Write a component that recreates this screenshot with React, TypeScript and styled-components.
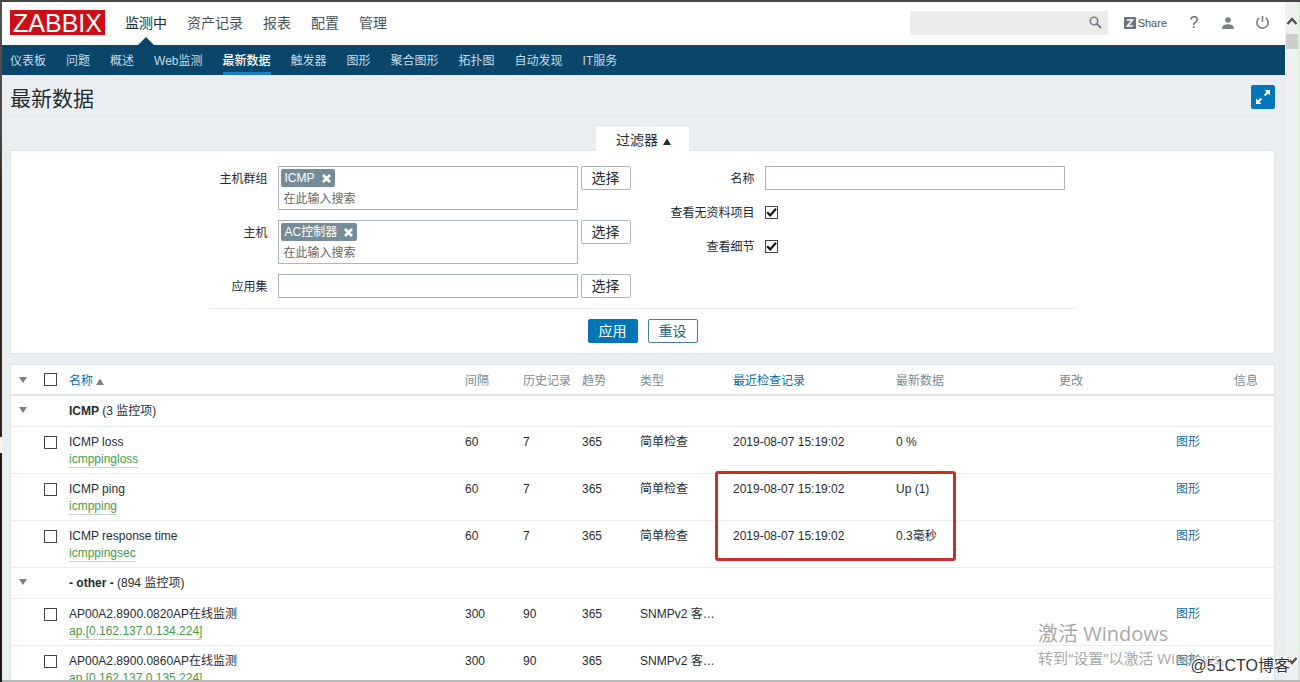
import React from 'react';
import styled, { createGlobalStyle } from 'styled-components';

const Global = createGlobalStyle`
  * { box-sizing: border-box; }
  body {
    margin: 0;
    background: #ebeef0;
    color: #1f2c33;
    font: 12px/16px "Liberation Sans", "Noto Sans CJK SC", sans-serif;
  }
  a { text-decoration: none; color: inherit; }
  button, input { font: inherit; color: inherit; }
`;

const Window = styled.div`
  position: relative;
  display: grid;
  grid-template-columns: 2px 1fr 13px 2px;
  height: 100vh;
  overflow: hidden;
  border-top: 2px solid #454545;
`;

const LeftEdge = styled.div`
  background: linear-gradient(#55504e 0, #4a4a48 130px, #2a2620 200px, #2a2620 435px, #f4f4f4 435px, #f4f4f4 451px, #1e1b12 451px);
`;

const RightEdge = styled.div`
  background: linear-gradient(#d6f5d2 94%, #dfe3e3 94%);
`;

const Page = styled.div`
  min-width: 0;
`;

const ScrollBar = styled.div`
  display: flex;
  flex-direction: column;
  justify-content: space-between;
  align-items: center;
  height: calc(100vh - 2px);
  padding: 14px 0 16px 1px;
  background: #f0f0f0;
`;

const ScrollTop = styled.div`
  display: flex;
  flex-direction: column;
  align-items: center;
  gap: 8px;
  width: 100%;
`;

const Thumb = styled.div`
  width: 100%;
  height: 15px;
  background: #cdcdcd;
`;

const Header = styled.header`
  display: flex;
  align-items: center;
  height: 43px;
  padding: 0 16px 2px 8px;
  background: #fff;
`;

const Logo = styled.a`
  width: 95px;
  height: 25px;
  margin-right: 20px;
  background: #cf0d15;
  color: #fff;
  font-size: 25px;
  line-height: 26px;
  text-align: center;
`;

const MainMenu = styled.nav`
  display: flex;
  flex: 1;
  gap: 20px;
  align-self: stretch;
`;

const MainItem = styled.a<{ $active?: boolean }>`
  position: relative;
  color: ${(p) => (p.$active ? '#1f2c33' : '#4a5359')};
  font-size: 14px;
  line-height: 42px;
  &::after {
    content: '';
    display: ${(p) => (p.$active ? 'block' : 'none')};
    position: absolute;
    left: 50%;
    bottom: -2px;
    margin-left: -8px;
    border: 8px solid transparent;
    border-top-width: 0;
    border-bottom-color: #0a466a;
  }
`;

const SearchBox = styled.form`
  display: flex;
  align-items: center;
  width: 198px;
  height: 24px;
  margin-right: 16px;
  padding-right: 6px;
  background: #ebebeb;
`;

const SearchInput = styled.input`
  flex: 1;
  min-width: 0;
  border: 0;
  background: transparent;
`;

const IconButton = styled.button`
  display: flex;
  padding: 0;
  border: 0;
  background: transparent;
  color: #768088;
`;

const ShareLink = styled.a`
  display: flex;
  align-items: center;
  gap: 2px;
  color: #4a5359;
  font-size: 11px;
`;

const UserTools = styled.div`
  display: flex;
  align-items: center;
  gap: 22px;
  margin-left: 21px;
`;

const HelpLink = styled.a`
  width: 12px;
  color: #5a666e;
  font-size: 16px;
  text-align: center;
`;

const SubNav = styled.nav`
  display: flex;
  gap: 20px;
  height: 30px;
  padding-left: 8px;
  background: #0a466a;
`;

const SubItem = styled.a<{ $active?: boolean }>`
  height: 30px;
  border-bottom: 3px solid ${(p) => (p.$active ? '#1f7fc4' : 'transparent')};
  color: ${(p) => (p.$active ? '#fff' : '#c6dbe6')};
  font-weight: ${(p) => (p.$active ? 500 : 400)};
  line-height: 32px;
`;

const Content = styled.main`
  padding: 0 10px 0 8px;
`;

const TitleBar = styled.div`
  display: flex;
  justify-content: space-between;
  align-items: center;
  height: 41px;
  padding-top: 4px;
  border-bottom: 1px solid #dfe4e7;
`;

const Title = styled.h1`
  margin: 0;
  padding-top: 4px;
  font-size: 21px;
  font-weight: 400;
  line-height: 30px;
`;

const FullscreenButton = styled.button`
  display: grid;
  place-items: center;
  width: 24px;
  height: 24px;
  padding: 0;
  border: 0;
  border-radius: 2px;
  background: #0275b8;
`;

const FilterSection = styled.section`
  display: flex;
  flex-direction: column;
  align-items: center;
  padding-top: 11px;
`;

const FilterTab = styled.button`
  display: flex;
  align-items: baseline;
  gap: 5px;
  height: 24px;
  margin-bottom: -1px;
  padding: 0 18px 0 20px;
  border: 0;
  background: #fff;
  font-size: 14px;
  line-height: 26px;
  z-index: 1;
`;

const FilterPanel = styled.form`
  display: flex;
  flex-direction: column;
  align-items: center;
  width: 100%;
  padding: 15px 0 10px;
  border: 1px solid #dfe4e7;
  background: #fff;
`;

const FilterColumns = styled.div`
  display: flex;
  gap: 40px;
  padding: 0 12px 10px 0;
  border-bottom: 1px solid #ebeef0;
`;

const FieldColumn = styled.div`
  display: flex;
  flex-direction: column;
  gap: 10px;
`;

const Field = styled.div<{ $label: number }>`
  display: grid;
  grid-template-columns: ${(p) => p.$label}px auto auto;
  justify-content: start;
  align-items: start;
`;

const Label = styled.label`
  height: 24px;
  padding-right: 10px;
  line-height: 26px;
  text-align: right;
  white-space: nowrap;
`;

const TextInput = styled.input`
  width: 300px;
  height: 24px;
  padding: 0 5px;
  border: 1px solid #acb6bb;
  background: #fff;
`;

const MultiSelect = styled.div`
  width: 300px;
  height: 44px;
  padding: 2px;
  border: 1px solid #acb6bb;
  background: #fff;
`;

const Tag = styled.span`
  display: flex;
  align-items: center;
  gap: 7px;
  width: max-content;
  height: 18px;
  padding: 0 4px;
  border-radius: 2px;
  background: #768d99;
  color: #fff;
  line-height: 18px;
`;

const TagRemove = styled.button`
  display: flex;
  padding: 0;
  border: 0;
  background: transparent;
`;

const TagInput = styled.input`
  display: block;
  width: 100%;
  height: 20px;
  padding: 3px 3px 0;
  border: 0;
  background: transparent;
  &::placeholder { color: #666; opacity: 1; }
`;

const Button = styled.button<{ $kind: 'plain' | 'primary' | 'outline' }>`
  height: 24px;
  padding: 0 10px;
  border: 1px solid ${(p) => (p.$kind === 'plain' ? '#acb6bb' : p.$kind === 'primary' ? '#0275b8' : '#3f7f9f')};
  border-radius: 2px;
  background: ${(p) => (p.$kind === 'primary' ? '#0275b8' : '#fff')};
  color: ${(p) => (p.$kind === 'plain' ? '#1f2c33' : p.$kind === 'primary' ? '#fff' : '#1f6287')};
  font-size: 14px;
  line-height: 22px;
`;

const SelectButton = styled(Button)`
  margin-left: 3px;
`;

const FilterActions = styled.div`
  display: flex;
  gap: 10px;
  padding-top: 10px;
`;

const CheckInput = styled.input.attrs({ type: 'checkbox' })`
  appearance: none;
  display: block;
  width: 13px;
  height: 13px;
  margin: 0;
  border: 1px solid #444;
  background: #fff;
  &:checked {
    background: #fff url("data:image/svg+xml,%3Csvg xmlns='http://www.w3.org/2000/svg' viewBox='0 0 11 11'%3E%3Cpath d='M1.2 5.2l3 3.2L10 1.800' fill='none' stroke='%23111' stroke-width='2.2'/%3E%3C/svg%3E");
  }
`;

const FormCheck = styled(CheckInput)`
  margin-top: 6px;
`;

const TableSection = styled.section`
  position: relative;
  margin-top: 10px;
  border: 1px solid #dfe4e7;
  background: #fff;
`;

const Table = styled.table`
  width: 100%;
  table-layout: fixed;
  border-collapse: separate;
  border-spacing: 0;
`;

const Th = styled.th`
  height: 31px;
  padding: 2px 0 0;
  border-bottom: 2px solid #dfe4e7;
  color: #768d99;
  font-weight: 400;
  text-align: left;
  white-space: nowrap;
`;

const ControlTh = styled(Th)`
  padding-top: 0;
`;

const InfoTh = styled(Th)`
  padding-right: 16px;
  text-align: right;
`;

const Td = styled.td`
  padding: 7px 0 5px;
  border-bottom: 1px solid #ebeef0;
  line-height: 17px;
  vertical-align: top;
  white-space: nowrap;
`;

const GroupTd = styled(Td)`
  height: 31px;
  padding: 7px 0 6px;
`;

const GroupToggleTd = styled(Td)`
  padding: 5px 0;
`;

const Toggle = styled.button`
  display: flex;
  align-items: center;
  height: 16px;
  padding: 0 0 0 8px;
  border: 0;
  background: transparent;
`;

const RowCheck = styled(CheckInput)`
  margin-top: 2px;
`;

const Link = styled.a`
  color: #0b6ca8;
`;

const SortLink = styled(Link)`
  display: flex;
  align-items: baseline;
  gap: 3px;
`;

const KeyLink = styled.a`
  display: block;
  width: max-content;
  height: 17px;
  border-bottom: 1px solid #c5d3c8;
  color: #429e47;
  line-height: 16px;
`;

const Highlight = styled.div`
  position: absolute;
  top: 106px;
  right: 318px;
  width: 241px;
  height: 90px;
  border: 3px solid #c9302c;
  border-radius: 3px;
  pointer-events: none;
`;

const Activation = styled.div`
  position: absolute;
  right: 74px;
  bottom: 13px;
  width: 188px;
  color: #a9a9a9;
  font-family: "Open Sans", "Noto Sans CJK SC", sans-serif;
  font-size: 15px;
  line-height: 22px;
  white-space: nowrap;
  pointer-events: none;
`;

const ActivationTitle = styled.div`
  font-size: 20px;
  line-height: 26px;
`;

const BlogMark = styled.div`
  position: absolute;
  right: 10px;
  bottom: 5px;
  color: #333;
  font-size: 16px;
  line-height: 22px;
  text-shadow: -1px -1px 0 #fff, 1px -1px 0 #fff, -1px 1px 0 #fff;
  pointer-events: none;
`;

const BottomEdge = styled.div`
  position: absolute;
  left: 2px;
  right: 0;
  bottom: 0;
  height: 2px;
  background: #b8b8b8;
`;

const Triangle = ({ up, color = '#768088' }: { up?: boolean; color?: string }) => (
  <svg width="8" height="7" viewBox="0 0 8 7" aria-hidden="true">
    <path d={up ? 'M0 7L4 .5L8 7z' : 'M0 1h8L4 7z'} fill={color} />
  </svg>
);

const Cross = () => (
  <svg width="9" height="9" viewBox="0 0 9 9" aria-hidden="true">
    <path d="M1 1l7 7M8 1L1 8" stroke="#fff" strokeWidth="2.600" />
  </svg>
);

const Chevron = ({ down }: { down?: boolean }) => (
  <svg width="12" height="10" viewBox="0 0 12 10" aria-hidden="true">
    <path d={down ? 'M1.500 2l4.500 5l4.500-5' : 'M1.500 8L6 3l4.500 5'} fill="none" stroke="#505050" strokeWidth="2.400" />
  </svg>
);

const mainMenu = ['监测中', '资产记录', '报表', '配置', '管理'];
const subMenu = ['仪表板', '问题', '概述', 'Web监测', '最新数据', '触发器', '图形', '聚合图形', '拓扑图', '自动发现', 'IT服务'];
const columnWidths = [33, 25, 0, 58, 59, 58, 93, 163, 163, 117, 98];

interface Item {
  name: string;
  itemKey: string;
  interval: string;
  history: string;
  type: string;
  checked?: string;
  value?: string;
}

const groups: { name: string; count: number; items: Item[] }[] = [
  {
    name: 'ICMP',
    count: 3,
    items: [
      { name: 'ICMP loss', itemKey: 'icmppingloss', interval: '60', history: '7', type: '简单检查', checked: '2019-08-07 15:19:02', value: '0 %' },
      { name: 'ICMP ping', itemKey: 'icmpping', interval: '60', history: '7', type: '简单检查', checked: '2019-08-07 15:19:02', value: 'Up (1)' },
      { name: 'ICMP response time', itemKey: 'icmppingsec', interval: '60', history: '7', type: '简单检查', checked: '2019-08-07 15:19:02', value: '0.3毫秒' },
    ],
  },
  {
    name: '- other -',
    count: 894,
    items: [
      { name: 'AP00A2.8900.0820AP在线监测', itemKey: 'ap.[0.162.137.0.134.224]', interval: '300', history: '90', type: 'SNMPv2 客…' },
      { name: 'AP00A2.8900.0860AP在线监测', itemKey: 'ap.[0.162.137.0.135.224]', interval: '300', history: '90', type: 'SNMPv2 客…' },
    ],
  },
];

const MultiField = ({ id, label, tag }: { id: string; label: string; tag: string }) => (
  <Field $label={69}>
    <Label htmlFor={id}>{label}</Label>
    <MultiSelect>
      <Tag>
        {tag}
        <TagRemove type="button" aria-label="移除"><Cross /></TagRemove>
      </Tag>
      <TagInput id={id} placeholder="在此输入搜索" />
    </MultiSelect>
    <SelectButton type="button" $kind="plain">选择</SelectButton>
  </Field>
);

const ItemRow = ({ item }: { item: Item }) => (
  <tr>
    <Td />
    <Td><RowCheck aria-label={item.name} /></Td>
    <Td>
      {item.name}
      <KeyLink href="#">{item.itemKey}</KeyLink>
    </Td>
    <Td>{item.interval}</Td>
    <Td>{item.history}</Td>
    <Td>365</Td>
    <Td>{item.type}</Td>
    <Td>{item.checked}</Td>
    <Td>{item.value}</Td>
    <Td />
    <Td><Link href="#">图形</Link></Td>
  </tr>
);

export default function App() {
  return (
    <Window>
      <Global />
      <LeftEdge />
      <Page>
        <Header>
          <Logo href="#">ZABBIX</Logo>
          <MainMenu>
            {mainMenu.map((m, i) => <MainItem key={m} href="#" $active={i === 0}>{m}</MainItem>)}
          </MainMenu>
          <SearchBox>
            <SearchInput aria-label="搜索" />
            <IconButton type="button" aria-label="搜索">
              <svg width="13" height="13" viewBox="0 0 13 13">
                <circle cx="5" cy="5" r="3.8" fill="none" stroke="currentColor" strokeWidth="1.6" />
                <path d="M7.8 7.8l4.2 4.2" stroke="currentColor" strokeWidth="2" />
              </svg>
            </IconButton>
          </SearchBox>
          <ShareLink href="#">
            <svg width="12" height="12" viewBox="0 0 12 12" aria-hidden="true">
              <rect width="12" height="12" rx="1" fill="#66757e" />
              <path d="M3 3h5.500L3.500 9H9" fill="none" stroke="#fff" strokeWidth="1.6" />
            </svg>
            Share
          </ShareLink>
          <UserTools>
            <HelpLink href="#">?</HelpLink>
            <IconButton type="button" aria-label="用户">
              <svg width="12" height="12" viewBox="0 0 12 12">
                <circle cx="6" cy="3" r="2.8" fill="currentColor" />
                <path d="M0 12c0-3.4 2.6-4.8 6-4.8s6 1.400 6 4.800z" fill="currentColor" />
              </svg>
            </IconButton>
            <IconButton type="button" aria-label="退出">
              <svg width="13" height="13" viewBox="0 0 12 12">
                <path d="M3 1.800a5.200 5.200 0 1 0 6 0M6 0v5.500" fill="none" stroke="currentColor" strokeWidth="1.500" />
              </svg>
            </IconButton>
          </UserTools>
        </Header>
        <SubNav>
          {subMenu.map((m) => <SubItem key={m} href="#" $active={m === '最新数据'}>{m}</SubItem>)}
        </SubNav>
        <Content>
          <TitleBar>
            <Title>最新数据</Title>
            <FullscreenButton type="button" aria-label="全屏">
              <svg width="16" height="16" viewBox="0 0 16 16">
                <path d="M9.500 1H15v5.500L13 4.600L10.300 7.200L8.800 5.700L11.500 3zM6.500 15H1V9.500L3 11.400L5.700 8.800L7.200 10.300L4.500 13z" fill="#fff" />
              </svg>
            </FullscreenButton>
          </TitleBar>
          <FilterSection>
            <FilterTab type="button">过滤器 <Triangle up color="#1f2c33" /></FilterTab>
            <FilterPanel>
              <FilterColumns>
                <FieldColumn>
                  <MultiField id="groups" label="主机群组" tag="ICMP" />
                  <MultiField id="hosts" label="主机" tag="AC控制器" />
                  <Field $label={69}>
                    <Label htmlFor="app">应用集</Label>
                    <TextInput id="app" />
                    <SelectButton type="button" $kind="plain">选择</SelectButton>
                  </Field>
                </FieldColumn>
                <FieldColumn>
                  <Field $label={94}>
                    <Label htmlFor="name">名称</Label>
                    <TextInput id="name" />
                  </Field>
                  <Field $label={94}>
                    <Label htmlFor="empty">查看无资料项目</Label>
                    <FormCheck id="empty" defaultChecked />
                  </Field>
                  <Field $label={94}>
                    <Label htmlFor="details">查看细节</Label>
                    <FormCheck id="details" defaultChecked />
                  </Field>
                </FieldColumn>
              </FilterColumns>
              <FilterActions>
                <Button type="button" $kind="primary">应用</Button>
                <Button type="button" $kind="outline">重设</Button>
              </FilterActions>
            </FilterPanel>
          </FilterSection>
          <TableSection>
            <Table>
              <colgroup>
                {columnWidths.map((w, i) => <col key={i} width={w || undefined} />)}
              </colgroup>
              <thead>
                <tr>
                  <ControlTh><Toggle aria-label="展开全部"><Triangle /></Toggle></ControlTh>
                  <ControlTh><CheckInput aria-label="全选" /></ControlTh>
                  <Th><SortLink href="#">名称 <Triangle up /></SortLink></Th>
                  <Th>间隔</Th>
                  <Th>历史记录</Th>
                  <Th>趋势</Th>
                  <Th>类型</Th>
                  <Th><Link href="#">最近检查记录</Link></Th>
                  <Th>最新数据</Th>
                  <Th>更改</Th>
                  <InfoTh>信息</InfoTh>
                </tr>
              </thead>
              <tbody>
                {groups.map((g) => (
                  <React.Fragment key={g.name}>
                    <tr>
                      <GroupToggleTd><Toggle aria-label="展开"><Triangle /></Toggle></GroupToggleTd>
                      <GroupTd />
                      <GroupTd colSpan={9}><b>{g.name}</b> ({g.count} 监控项)</GroupTd>
                    </tr>
                    {g.items.map((item) => <ItemRow key={item.itemKey} item={item} />)}
                  </React.Fragment>
                ))}
              </tbody>
            </Table>
            <Highlight />
          </TableSection>
        </Content>
      </Page>
      <ScrollBar aria-hidden="true">
        <ScrollTop>
          <Chevron />
          <Thumb />
        </ScrollTop>
        <Chevron down />
      </ScrollBar>
      <RightEdge />
      <Activation>
        <ActivationTitle>激活 Windows</ActivationTitle>
        转到“设置”以激活 Windows。
      </Activation>
      <BlogMark>@51CTO博客</BlogMark>
      <BottomEdge />
    </Window>
  );
}
